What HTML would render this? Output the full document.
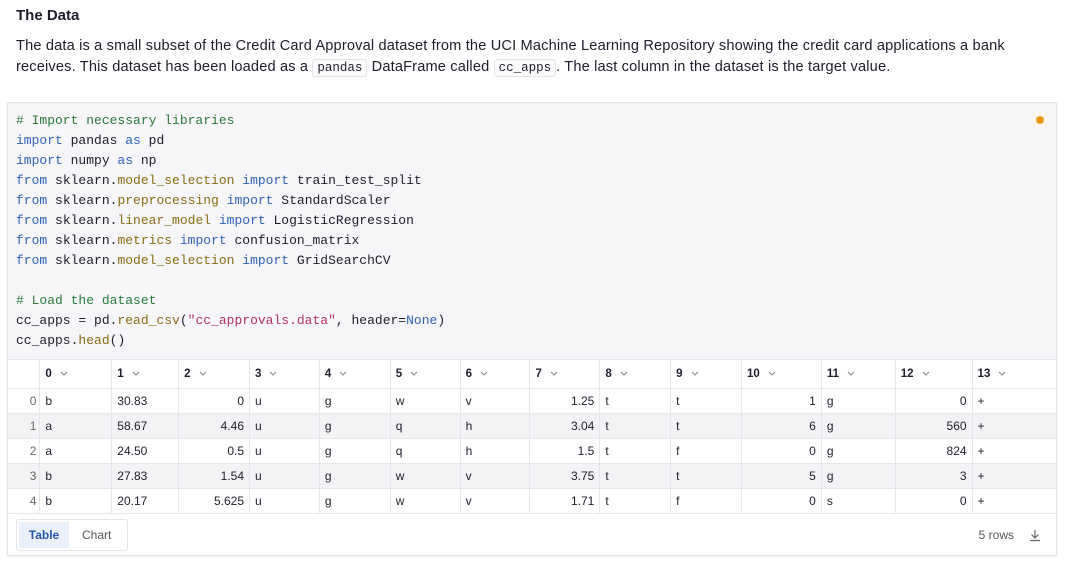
<!DOCTYPE html>
<html><head><meta charset="utf-8"><style>
*{box-sizing:border-box;margin:0;padding:0}
body{width:1068px;height:564px;background:#fff;font-family:"Liberation Sans",sans-serif;color:#1d1d2b;position:relative;overflow:hidden}
h3{position:absolute;left:16px;top:7px;font-size:15px;font-weight:bold}
.p{position:absolute;left:16px;top:36px;font-size:14.6px;line-height:21px;width:1040px;letter-spacing:0.16px}
.ic{font-family:"Liberation Mono",monospace;font-size:12.5px;border:1px solid #e3e3e8;border-radius:3px;padding:1px 4px;background:#fafafb;letter-spacing:0}
.card{position:absolute;left:7px;top:102px;width:1050px;height:454px;border:1px solid #e4e4ea;box-shadow:0 1px 2px rgba(0,0,0,.08);background:#fff;overflow:hidden}
.code{position:absolute;left:0;top:0;width:1048px;height:256px;background:#f6f6f9;font-family:"Liberation Mono",monospace;font-size:13px;line-height:20px;padding:8px 0 0 8px;white-space:pre;color:#1d1d2b}
.c{color:#2c7a3a}.k{color:#2f63b8}.m{color:#8a6a12}.s{color:#b5316a}
.dot{position:absolute;right:12px;top:13px;width:8px;height:8px;border-radius:50%;background:#f4940c}
table{position:absolute;left:0;top:256px;border-collapse:collapse;font-size:12px;background:#fff}
td,th{height:25px;border-right:1px solid #e6e6ea;border-bottom:1px solid #e6e6ea;padding:0 5px;text-align:left;font-weight:normal;white-space:nowrap;background:#fff}
th{height:29px;font-weight:bold;font-size:11.5px;border-top:1px solid #e6e6ea}
th svg{margin-left:8px;vertical-align:middle}
td.n{text-align:right}
td.i{text-align:right;color:#666;padding-right:3px}
tr.g td{background:#f3f3f5}
.ft{position:absolute;left:0;top:410px;width:1048px;height:43px}
.tabs{position:absolute;left:8px;top:6px;border:1px solid #e4e4ea;border-radius:3px;height:32px;width:112px;padding:2px}
.t1{position:absolute;left:2px;top:2px;width:50px;height:26px;background:#eaf0fa;color:#2556a6;font-weight:bold;font-size:12px;line-height:26px;text-align:center}
.t2{position:absolute;left:65px;top:2px;font-size:12px;line-height:26px;color:#555}
.rows{position:absolute;right:42px;top:15px;font-size:12px;color:#555}
</style></head><body>
<h3>The Data</h3>
<div class="p">The data is a small subset of the Credit Card Approval dataset from the UCI Machine Learning Repository showing the credit card applications a bank<br>receives. This dataset has been loaded as a <span class="ic">pandas</span> DataFrame called <span class="ic">cc_apps</span>. The last column in the dataset is the target value.</div>
<div class="card">
<div class="code"><span class="c"># Import necessary libraries</span>
<span class="k">import</span> pandas <span class="k">as</span> pd
<span class="k">import</span> numpy <span class="k">as</span> np
<span class="k">from</span> sklearn.<span class="m">model_selection</span> <span class="k">import</span> train_test_split
<span class="k">from</span> sklearn.<span class="m">preprocessing</span> <span class="k">import</span> StandardScaler
<span class="k">from</span> sklearn.<span class="m">linear_model</span> <span class="k">import</span> LogisticRegression
<span class="k">from</span> sklearn.<span class="m">metrics</span> <span class="k">import</span> confusion_matrix
<span class="k">from</span> sklearn.<span class="m">model_selection</span> <span class="k">import</span> GridSearchCV

<span class="c"># Load the dataset</span>
cc_apps = pd.<span class="m">read_csv</span>(<span class="s">"cc_approvals.data"</span>, header=<span class="k">None</span>)
cc_apps.<span class="m">head</span>()</div>
<div class="dot"></div>
<table>
<colgroup><col style="width:32px"><col style="width:72px"><col style="width:67px"><col style="width:71px"><col style="width:70px"><col style="width:71px"><col style="width:70px"><col style="width:70px"><col style="width:70px"><col style="width:71px"><col style="width:71px"><col style="width:80px"><col style="width:74px"><col style="width:77px"><col style="width:84px"></colgroup>
<tr><th></th><th>0<svg width="8" height="5"><path d="M1 1l3 3 3-3" stroke="#888" fill="none"/></svg></th><th>1<svg width="8" height="5"><path d="M1 1l3 3 3-3" stroke="#888" fill="none"/></svg></th><th>2<svg width="8" height="5"><path d="M1 1l3 3 3-3" stroke="#888" fill="none"/></svg></th><th>3<svg width="8" height="5"><path d="M1 1l3 3 3-3" stroke="#888" fill="none"/></svg></th><th>4<svg width="8" height="5"><path d="M1 1l3 3 3-3" stroke="#888" fill="none"/></svg></th><th>5<svg width="8" height="5"><path d="M1 1l3 3 3-3" stroke="#888" fill="none"/></svg></th><th>6<svg width="8" height="5"><path d="M1 1l3 3 3-3" stroke="#888" fill="none"/></svg></th><th>7<svg width="8" height="5"><path d="M1 1l3 3 3-3" stroke="#888" fill="none"/></svg></th><th>8<svg width="8" height="5"><path d="M1 1l3 3 3-3" stroke="#888" fill="none"/></svg></th><th>9<svg width="8" height="5"><path d="M1 1l3 3 3-3" stroke="#888" fill="none"/></svg></th><th>10<svg width="8" height="5"><path d="M1 1l3 3 3-3" stroke="#888" fill="none"/></svg></th><th>11<svg width="8" height="5"><path d="M1 1l3 3 3-3" stroke="#888" fill="none"/></svg></th><th>12<svg width="8" height="5"><path d="M1 1l3 3 3-3" stroke="#888" fill="none"/></svg></th><th style="border-right:0">13<svg width="8" height="5"><path d="M1 1l3 3 3-3" stroke="#888" fill="none"/></svg></th></tr>
<tr><td class="i">0</td><td>b</td><td>30.83</td><td class="n">0</td><td>u</td><td>g</td><td>w</td><td>v</td><td class="n">1.25</td><td>t</td><td>t</td><td class="n">1</td><td>g</td><td class="n">0</td><td style="border-right:0">+</td></tr>
<tr class="g"><td class="i">1</td><td>a</td><td>58.67</td><td class="n">4.46</td><td>u</td><td>g</td><td>q</td><td>h</td><td class="n">3.04</td><td>t</td><td>t</td><td class="n">6</td><td>g</td><td class="n">560</td><td style="border-right:0">+</td></tr>
<tr><td class="i">2</td><td>a</td><td>24.50</td><td class="n">0.5</td><td>u</td><td>g</td><td>q</td><td>h</td><td class="n">1.5</td><td>t</td><td>f</td><td class="n">0</td><td>g</td><td class="n">824</td><td style="border-right:0">+</td></tr>
<tr class="g"><td class="i">3</td><td>b</td><td>27.83</td><td class="n">1.54</td><td>u</td><td>g</td><td>w</td><td>v</td><td class="n">3.75</td><td>t</td><td>t</td><td class="n">5</td><td>g</td><td class="n">3</td><td style="border-right:0">+</td></tr>
<tr><td class="i">4</td><td>b</td><td>20.17</td><td class="n">5.625</td><td>u</td><td>g</td><td>w</td><td>v</td><td class="n">1.71</td><td>t</td><td>f</td><td class="n">0</td><td>s</td><td class="n">0</td><td style="border-right:0">+</td></tr>
</table>
<div class="ft"><div class="tabs"><div class="t1">Table</div><div class="t2">Chart</div></div><div class="rows">5 rows</div>
<svg style="position:absolute;right:14px;top:15px" width="14" height="14" viewBox="0 0 14 14"><path d="M7 2v8M3.5 6.5L7 10l3.5-3.5M2 12.5h10" stroke="#666" stroke-width="1.2" fill="none"/></svg></div>
</div>
</body></html>
